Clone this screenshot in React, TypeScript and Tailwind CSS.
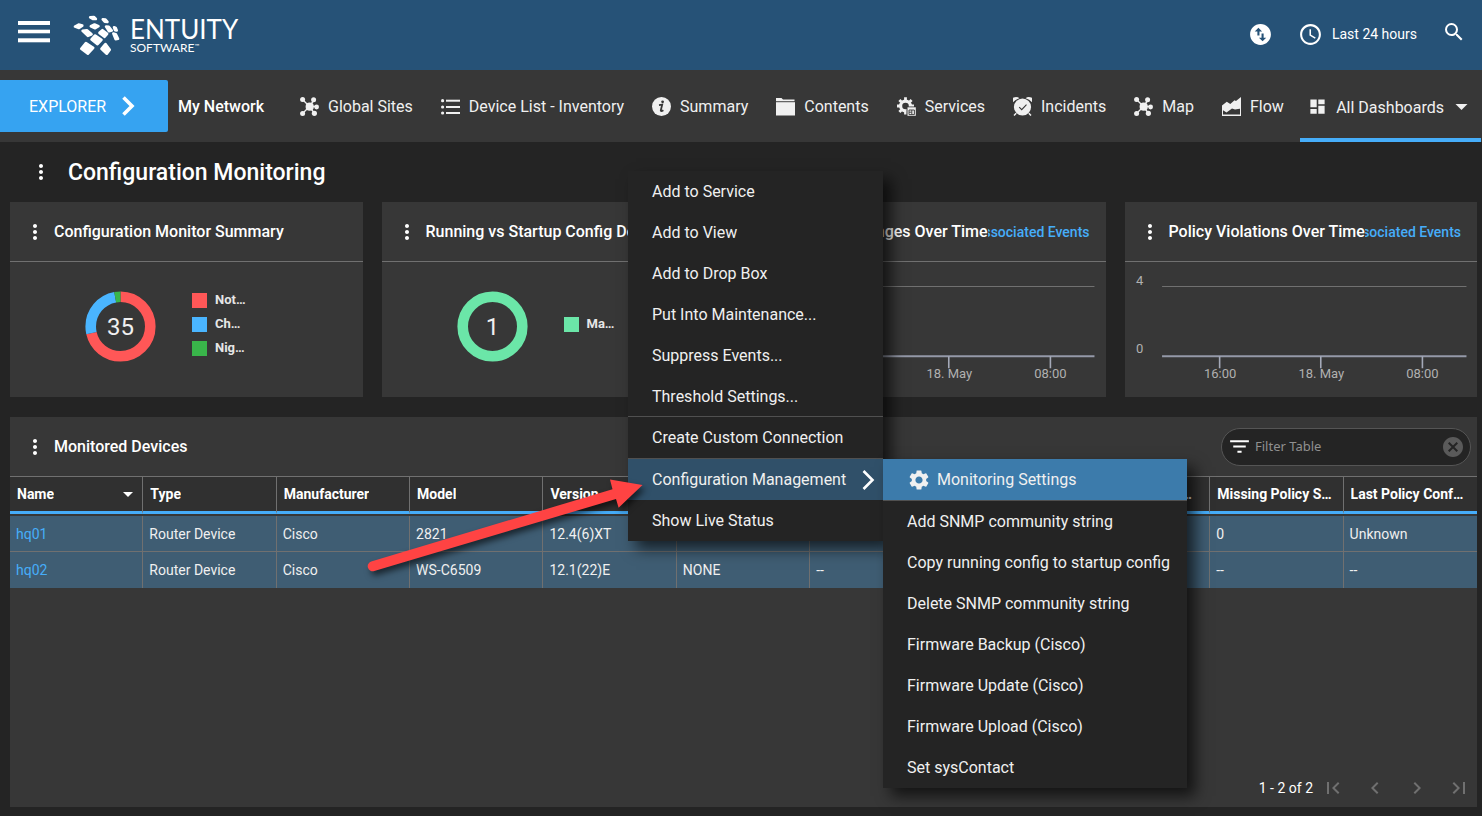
import React from "react";
import type { ReactNode } from "react";
import {
  MdAccessTime,
  MdCancel,
  MdChevronLeft,
  MdChevronRight,
  MdDashboard,
  MdFilterList,
  MdFirstPage,
  MdLastPage,
  MdMoreVert,
  MdSearch,
  MdSettings,
  MdSwapVerticalCircle,
} from "react-icons/md";

function LogoMark() {
  return (
    <svg viewBox="220 42 142 122" className="h-[41px] w-[47px]" fill="#fff" stroke="#fff" strokeWidth="8" strokeLinejoin="round">
      <path d="M272 48 L283 47 L289 53 L280 53 Z" />
      <path d="M310 54 L318 55 L324 62 L316 61 Z" />
      <path d="M226 76 L237 70 L248 73 L238 80 Z" />
      <path d="M274 75 L285 70 L297 75 L287 81 Z" />
      <path d="M320 76 L328 77 L337 88 L329 90 Z" />
      <path d="M344 78 L349 80 L352 88 L347 87 Z" />
      <path d="M249 89 L262 87 L276 99 L265 104 Z" />
      <path d="M300 95 L309 87 L323 98 L315 107 Z" />
      <path d="M342 97 L349 99 L356 113 L349 114 Z" />
      <path d="M276 115 L287 103 L306 116 L294 129 Z" />
      <path d="M245 143 L259 126 L281 140 L265 158 Z" />
      <path d="M306 143 L318 129 L331 146 L322 158 Z" />
    </svg>
  );
}

function HubIcon() {
  return (
    <svg viewBox="0 0 19 19" className="size-[19px]" fill="currentColor" stroke="currentColor">
      <path d="M2.5 2.5 9.5 9.5 2.5 16.5M14 3 9.5 9.5H17M9.5 9.5 14.5 16.5" fill="none" strokeWidth="1.4" />
      <g stroke="none">
        <circle cx="9.7" cy="9.7" r="4.1" />
        <circle cx="2.6" cy="2.6" r="2.5" />
        <circle cx="13.6" cy="2.8" r="2.5" />
        <circle cx="16.6" cy="10" r="2.4" />
        <circle cx="14.4" cy="16.3" r="2.6" />
        <circle cx="2.6" cy="16.4" r="2.5" />
      </g>
    </svg>
  );
}

function ListIcon() {
  return (
    <svg viewBox="0 0 19 19" className="size-[19px]" fill="currentColor">
      <rect x="5" y="2.7" width="14" height="2" />
      <rect x="5" y="9" width="14" height="2" />
      <rect x="5" y="15" width="14" height="2" />
      <circle cx="1.6" cy="3.7" r="1.6" />
      <circle cx="1.6" cy="10" r="1.6" />
      <circle cx="1.6" cy="16" r="1.6" />
    </svg>
  );
}

function InfoIcon() {
  return (
    <svg viewBox="0 0 19 19" className="size-[19px]">
      <circle cx="9.5" cy="9.5" r="9.5" fill="currentColor" />
      <circle cx="10.6" cy="4.8" r="1.4" fill="#373737" />
      <path d="M7 8.1 10.2 7.6 8.8 13.4Q8.8 14.8 11.4 13.2" fill="none" stroke="#373737" strokeWidth="1.8" />
    </svg>
  );
}

function FolderIcon() {
  return (
    <svg viewBox="0 0 19 19" className="size-[19px]" fill="currentColor">
      <path d="M0 1H5.5L7 2.5H18.5V4.2H0Z" />
      <rect y="5.2" width="19" height="13.3" />
    </svg>
  );
}

function ServicesIcon() {
  return (
    <svg viewBox="0 0 19 19" className="size-[19px]">
      <circle cx="8.5" cy="9" r="4.9" fill="none" stroke="currentColor" strokeWidth="3.2" />
      <g stroke="currentColor" strokeWidth="2.8">
        <path d="M8.5 3.2V.3M8.5 17.6V15M2.8 9H0M14 9H17M4.4 5 2.4 3M12.6 5 14.6 3M4.4 13 2.4 15" />
      </g>
      <rect x="9.5" y="9.5" width="9.5" height="9.5" fill="#373737" />
      <rect x="10.5" y="10.3" width="8.3" height="8.5" fill="currentColor" />
      <path d="M12 13H17.4V17.6H12ZM12 15.2H14.6M14.8 13V17.4" fill="none" stroke="#373737" strokeWidth="0.9" />
    </svg>
  );
}

function AlarmIcon() {
  return (
    <svg viewBox="0 0 19 19" className="size-[19px]">
      <circle cx="9.5" cy="10" r="8.6" fill="currentColor" />
      <path d="M0 5.2V.8Q4-.8 6.4 1.2 2.6 2.3 0 5.2ZM19 5.2V.8Q15-.8 12.6 1.2 16.4 2.3 19 5.2Z" fill="currentColor" />
      <path d="M3.2 16.2 1 18.5M15.8 16.2 18 18.5" stroke="currentColor" strokeWidth="1.5" />
      <path d="M6.2 10.2 8.7 12.7 13.5 7.7" fill="none" stroke="#373737" strokeWidth="1.1" />
    </svg>
  );
}

function FlowIcon() {
  return (
    <svg viewBox="0 0 19 19" className="size-[19px]" fill="currentColor">
      <path d="M0 8.5 4.8 4.8 8.3 7 12.5 3.2 14 4 19 0V11.5L13 12.5 10 11.6 4.5 15.5 1 13.2V17.5H18V10H19V19H0Z" />
    </svg>
  );
}

function Caret({ small = false }: { small?: boolean }) {
  return (
    <svg viewBox="0 0 12 6" className={small ? "h-[5px] w-[10px]" : "h-[6px] w-[13px]"} fill="currentColor">
      <path d="M0 0H12L6 6Z" />
    </svg>
  );
}

const navItems: { label: string; icon: ReactNode }[] = [
  { label: "Global Sites", icon: <HubIcon /> },
  { label: "Device List - Inventory", icon: <ListIcon /> },
  { label: "Summary", icon: <InfoIcon /> },
  { label: "Contents", icon: <FolderIcon /> },
  { label: "Services", icon: <ServicesIcon /> },
  { label: "Incidents", icon: <AlarmIcon /> },
  { label: "Map", icon: <HubIcon /> },
  { label: "Flow", icon: <FlowIcon /> },
];

function Header() {
  return (
    <header className="flex h-[70px] items-center bg-[#265277] pr-4 pl-[18px] text-white">
      <button aria-label="Main menu" className="mb-[6px]">
        <svg viewBox="0 0 32 22" className="h-[22px] w-8" fill="#fff">
          <rect width="32" height="4" />
          <rect y="8.7" width="32" height="3.6" />
          <rect y="17.3" width="32" height="4" />
        </svg>
      </button>
      <a href="#home" className="ml-[23px] flex items-center gap-[10px]">
        <LogoMark />
        <span className="flex flex-col font-['Lato',sans-serif]">
          <span className="text-[26px] leading-[26px]">ENTUITY</span>
          <span className="flex items-start text-[12px] leading-3">
            SOFTWARE<span className="text-[6px] leading-2">™</span>
          </span>
        </span>
      </a>
      <div className="ml-auto flex items-center pb-[2px]">
        <button aria-label="Refresh">
          <MdSwapVerticalCircle className="size-[25px]" />
        </button>
        <button className="ml-[25px] flex items-center gap-[9px] text-[14px]">
          <MdAccessTime className="size-[25px]" />
          Last 24 hours
        </button>
        <button aria-label="Search" className="mb-1 ml-[25px]">
          <MdSearch className="size-6" />
        </button>
      </div>
    </header>
  );
}

function Nav() {
  return (
    <nav className="flex h-[72px] items-center bg-[#373737] text-[16px] whitespace-nowrap text-[#f0f0f0]">
      <button className="flex h-[52px] w-[168px] shrink-0 items-center gap-4 rounded-r-xs bg-[#36a3f1] pl-[29px] text-white">
        <span className="pt-[2px]">EXPLORER</span>
        <svg viewBox="0 0 13 20" className="h-5 w-[13px]" fill="none" stroke="#fff" strokeWidth="3.6">
          <path d="M1.5 1.5 10 10 1.5 18.5" />
        </svg>
      </button>
      <a href="#my-network" className="ml-[10px] pt-[2px] font-medium text-white">
        My Network
      </a>
      <div className="ml-[36px] flex items-center gap-[28px]">
        {navItems.map((item) => (
          <a key={item.label} href={"#" + item.label.toLowerCase().replaceAll(" ", "-")} className="flex items-center gap-[9px]">
            {item.icon}
            <span className="pt-[2px]">{item.label}</span>
          </a>
        ))}
      </div>
      <button className="mr-px ml-auto flex h-full items-center border-b-4 border-[#46adf9] pt-[5px] pr-[13px] pl-2">
        <MdDashboard className="mr-[9px] size-[19px]" />
        <span className="mr-[11px] pt-[2px]">All Dashboards</span>
        <Caret />
      </button>
    </nav>
  );
}

function PanelHeader({ title, link = false, children }: { title: string; link?: boolean; children?: ReactNode }) {
  return (
    <div className="flex h-[60px] items-center border-b border-[#707070] pr-4 pl-[13px]">
      <button aria-label={title + " options"} className="shrink-0 text-white">
        <MdMoreVert className="size-6" />
      </button>
      <h2 className="ml-[7px] shrink-0 text-[16px] font-medium whitespace-nowrap text-white">{title}</h2>
      {link && (
        <div className="flex min-w-0 flex-1 justify-end overflow-hidden pt-[2px]">
          <a href="#events" className="shrink-0 text-[14px] font-medium whitespace-nowrap text-[#46adf9]">
            Associated Events
          </a>
        </div>
      )}
      {children}
    </div>
  );
}

interface Slice {
  label: string;
  value: number;
  color: string;
}

function DonutCard({ title, slices }: { title: string; slices: Slice[] }) {
  const total = slices.reduce((sum, s) => sum + s.value, 0);
  const starts = slices.map((_, i) => slices.slice(0, i).reduce((sum, s) => sum + s.value, 0));
  return (
    <section className="h-[195px] min-w-0 overflow-hidden bg-[#373737]">
      <PanelHeader title={title} />
      <div className="flex pt-[26px] pl-[75px]">
        <svg viewBox="0 0 71 71" className="mt-[3px] size-[71px]">
          <g transform="rotate(-90 35.5 35.5)" fill="none" strokeWidth="10.6">
            {slices.map((s, i) => (
              <circle
                key={s.label}
                cx="35.5"
                cy="35.5"
                r="29.8"
                pathLength={total}
                stroke={s.color}
                strokeDasharray={`${s.value} ${total - s.value}`}
                strokeDashoffset={-starts[i]}
              />
            ))}
          </g>
          <text x="35.5" y="44" textAnchor="middle" fontSize="24" fill="#f0f0f0">
            {total}
          </text>
        </svg>
        <ul className="ml-9 flex h-[72px] flex-col justify-center">
          {slices.map((s) => (
            <li key={s.label} className="flex h-6 items-center gap-2 text-[13px] font-bold text-[#e6e6e6]">
              <svg className="size-[15px]">
                <rect width="15" height="15" fill={s.color} />
              </svg>
              {s.label}
            </li>
          ))}
        </ul>
      </div>
    </section>
  );
}

function TimeCard({ title }: { title: string }) {
  return (
    <section className="h-[195px] min-w-0 overflow-hidden bg-[#373737]">
      <PanelHeader title={title} link />
      <svg viewBox="0 0 352 135" className="w-full" fontSize="13" fill="#b0b0b0">
        <path d="M37 24.5H341" stroke="#707070" />
        <path d="M37 94H341" stroke="#9499a8" strokeWidth="2" />
        <path d="M94.5 94V106M195.5 94V106M297 94V106" stroke="#a4a9b8" strokeWidth="1.6" />
        <text x="11" y="23">4</text>
        <text x="11" y="91">0</text>
        <g textAnchor="middle">
          <text x="95" y="116">16:00</text>
          <text x="196" y="116">18. May</text>
          <text x="297" y="116">08:00</text>
        </g>
      </svg>
    </section>
  );
}

const columns = [
  "Name",
  "Type",
  "Manufacturer",
  "Model",
  "Version",
  "Policy",
  "Status",
  "Changed",
  "Violated Policy Statements",
  "Missing Policy Statements",
  "Last Policy Conformance",
];

const rows = [
  ["hq01", "Router Device", "Cisco", "2821", "12.4(6)XT", "NONE", "--", "--", "--", "0", "Unknown"],
  ["hq02", "Router Device", "Cisco", "WS-C6509", "12.1(22)E", "NONE", "--", "--", "--", "--", "--"],
];

function DeviceTable() {
  return (
    <table className="w-full table-fixed border-separate border-spacing-0 text-left text-[14px]">
      <thead>
        <tr>
          {columns.map((c, i) => (
            <th
              key={c}
              className="h-[37px] border-r border-b-[3px] border-r-[#707070] border-b-[#46adf9] bg-[#303030] pr-[9px] pl-[7px] font-bold text-white last:border-r-0"
            >
              <span className="flex items-center justify-between">
                <span className="truncate">{c}</span>
                {i === 0 && <Caret small />}
              </span>
            </th>
          ))}
        </tr>
      </thead>
      <tbody>
        <tr aria-hidden="true">
          <td colSpan={11} className="h-[2px] p-0" />
        </tr>
        {rows.map((row) => (
          <tr key={row[0]} className="group">
            {row.map((cell, i) => (
              <td
                key={i}
                className="h-9 truncate border-r border-b border-[#707070] bg-[#3f5d73] px-[6px] pt-px text-[#f0f0f0] group-last:border-b-0 last:border-r-0"
              >
                {i === 0 ? (
                  <a href={"#" + cell} className="text-[#46adf9]">
                    {cell}
                  </a>
                ) : (
                  cell
                )}
              </td>
            ))}
          </tr>
        ))}
      </tbody>
    </table>
  );
}

function DevicesPanel() {
  return (
    <section className="mt-5 mr-[5px] mb-[9px] ml-[10px] flex flex-1 flex-col bg-[#373737]">
      <PanelHeader title="Monitored Devices">
        <label className="-mr-[10px] ml-auto flex h-[38px] w-[250px] items-center rounded-full border border-[#555] bg-[#242424] px-[5px] text-white">
          <MdFilterList className="size-[25px] shrink-0" />
          <input
            type="text"
            aria-label="Filter Table"
            placeholder="Filter Table"
            className="ml-[3px] min-w-0 flex-1 bg-transparent font-['Noto_Sans',sans-serif] text-[13px] outline-none placeholder:text-[#909090]"
          />
          <MdCancel className="size-6 shrink-0 text-[#5a5a5a]" />
        </label>
      </PanelHeader>
      <DeviceTable />
      <div className="mt-auto flex h-[38px] items-center justify-end pr-[6px] text-[14px] text-white">
        <span>1 - 2 of 2</span>
        <div className="ml-2 flex gap-[18px] text-[#707070]">
          <button aria-label="First page">
            <MdFirstPage className="size-6" />
          </button>
          <button aria-label="Previous page">
            <MdChevronLeft className="size-6" />
          </button>
          <button aria-label="Next page">
            <MdChevronRight className="size-6" />
          </button>
          <button aria-label="Last page">
            <MdLastPage className="size-6" />
          </button>
        </div>
      </div>
    </section>
  );
}

const menuItems = [
  "Add to Service",
  "Add to View",
  "Add to Drop Box",
  "Put Into Maintenance...",
  "Suppress Events...",
  "Threshold Settings...",
];

const subItems = [
  "Add SNMP community string",
  "Copy running config to startup config",
  "Delete SNMP community string",
  "Firmware Backup (Cisco)",
  "Firmware Update (Cisco)",
  "Firmware Upload (Cisco)",
  "Set sysContact",
];

function ContextMenu() {
  return (
    <div className="absolute top-[171px] left-[628px] flex items-start text-[16px] whitespace-nowrap text-[#f0f0f0]">
      <div role="menu" className="flex w-[255px] flex-col bg-[#242424] shadow-[8px_8px_14px_rgba(0,0,0,0.65)]">
        {menuItems.map((m) => (
          <button key={m} role="menuitem" className="h-[41px] pl-6 text-left">
            {m}
          </button>
        ))}
        <div className="-mt-px flex h-[43px] flex-col border-t border-b border-[#505050]">
          <button role="menuitem" className="flex-1 pl-6 text-left">
            Create Custom Connection
          </button>
        </div>
        <button role="menuitem" className="flex h-[41px] items-center justify-between bg-[#305069] pr-2 pl-6">
          Configuration Management
          <svg viewBox="0 0 13 20" className="h-5 w-[13px]" fill="none" stroke="#fff" strokeWidth="2.6">
            <path d="M1.5 1 10.5 10 1.5 19" />
          </svg>
        </button>
        <button role="menuitem" className="h-[41px] pl-6 text-left">
          Show Live Status
        </button>
      </div>
      <div role="menu" className="mt-[288px] flex w-[304px] flex-col bg-[#242424] shadow-[8px_8px_14px_rgba(0,0,0,0.65)]">
        <button role="menuitem" className="flex h-[42px] items-center gap-[6px] border-b border-[#505050] bg-[#3c7bab] pl-6">
          <MdSettings className="size-6" />
          Monitoring Settings
        </button>
        {subItems.map((m) => (
          <button key={m} role="menuitem" className="h-[41px] pl-6 text-left">
            {m}
          </button>
        ))}
      </div>
    </div>
  );
}

function Arrow() {
  return (
    <svg
      viewBox="360 470 300 120"
      className="pointer-events-none absolute top-[470px] left-[360px] h-[120px] w-[300px] drop-shadow-[3px_4px_3px_rgba(0,0,0,0.6)]"
    >
      <path d="M371.2 561.4 L612.5 489.3 L610 479.5 L642.5 485 L618.6 507.7 L616 499 L374.3 571 A5 5 0 0 1 371.2 561.4 Z" fill="#ff4343" />
    </svg>
  );
}

export default function App() {
  return (
    <div className="relative flex min-h-screen flex-col overflow-hidden bg-[#242424] font-['Roboto',sans-serif]">
      <Header />
      <Nav />
      <main className="flex flex-1 flex-col">
        <div className="flex h-[60px] items-center gap-[15px] pl-[29px] text-white">
          <button aria-label="Dashboard options">
            <MdMoreVert className="size-6" />
          </button>
          <h1 className="pt-[2px] text-[23px] font-medium">Configuration Monitoring</h1>
        </div>
        <div className="mr-[5px] ml-[10px] grid grid-cols-4 gap-[19px]">
          <DonutCard
            title="Configuration Monitor Summary"
            slices={[
              { label: "Not…", value: 25, color: "#ff5757" },
              { label: "Ch…", value: 9, color: "#4ab5ff" },
              { label: "Nig…", value: 1, color: "#39b54a" },
            ]}
          />
          <DonutCard title="Running vs Startup Config Details" slices={[{ label: "Ma…", value: 1, color: "#6be6a8" }]} />
          <TimeCard title="Config Changes Over Time" />
          <TimeCard title="Policy Violations Over Time" />
        </div>
        <DevicesPanel />
      </main>
      <ContextMenu />
      <Arrow />
    </div>
  );
}
